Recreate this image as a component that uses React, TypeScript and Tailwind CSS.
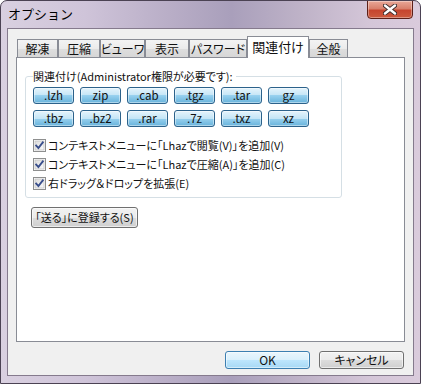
import React from "react";

const FONT = "[font-family:'Noto_Sans_CJK_JP','Noto_Sans',sans-serif]";

const tabs: { label: string; w: string; selected?: boolean }[] = [
  { label: "解凍", w: "w-[41px]" },
  { label: "圧縮", w: "w-[42px]" },
  { label: "ビューワ", w: "w-[45px]" },
  { label: "表示", w: "w-[44px]" },
  { label: "パスワード", w: "w-[58px]" },
  { label: "関連付け", w: "w-[62px]", selected: true },
  { label: "全般", w: "w-[39px]" },
];

const exts = [".lzh", "zip", ".cab", ".tgz", ".tar", "gz", ".tbz", ".bz2", ".rar", ".7z", ".txz", "xz"];

const checks = [
  "コンテキストメニューに「Lhazで閲覧(V)」を追加(V)",
  "コンテキストメニューに「Lhazで圧縮(A)」を追加(C)",
  "右ドラッグ＆ドロップを拡張(E)",
];

function CheckBox() {
  return (
    <svg width="13" height="13" viewBox="0 0 13 13" className="shrink-0">
      <defs>
        <linearGradient id="cbg" x1="0" y1="0" x2="1" y2="1">
          <stop offset="0" stopColor="#dcdcdc" />
          <stop offset="1" stopColor="#fbfbfb" />
        </linearGradient>
      </defs>
      <rect x="0.5" y="0.5" width="12" height="12" fill="#fff" stroke="#8e8f8f" />
      <rect x="2" y="2" width="9" height="9" fill="url(#cbg)" stroke="#c4c4c4" strokeWidth="0.8" />
      <path d="M3.2 6.6 L5.4 9 L9.8 3.4" fill="none" stroke="#3a4f8c" strokeWidth="1.9" strokeLinecap="square" />
    </svg>
  );
}

export default function App() {
  return (
    <div
      className={`w-[421px] h-[384px] overflow-hidden rounded-t-[7px] border border-[#4b4253] bg-[linear-gradient(90deg,#d9d0e0_0%,#cfc4d9_20%,#b9aec7_40%,#a99fbb_55%,#bfb3c8_72%,#d4c6d8_88%,#dacbdc_100%)] flex flex-col text-[11px] text-[#111] ${FONT} [font-feature-settings:'palt'] whitespace-nowrap`}
    >
      {/* Title bar */}
      <div className="h-[27px] flex justify-between shrink-0">
        <div className="pl-[7px] pt-[4px] text-[13px] leading-[18px] text-black [font-feature-settings:normal]">オプション</div>
        <div className="-mt-px mr-[7px] w-[46px] h-[19px] rounded-b-[4px] border border-[#5c1f18] bg-[linear-gradient(#e9a898_0%,#d8806c_45%,#c6452e_55%,#cc5a3e_100%)] flex items-center justify-center shadow-[inset_0_0_0_1px_rgba(255,255,255,0.35)]">
          <svg width="14" height="11" viewBox="0 0 14 11">
            <path d="M2 1.5 L12 9.5 M12 1.5 L2 9.5" stroke="#3a2a2a" strokeWidth="4.2" strokeLinecap="round" />
            <path d="M2 1.5 L12 9.5 M12 1.5 L2 9.5" stroke="#ffffff" strokeWidth="2.4" strokeLinecap="round" />
          </svg>
        </div>
      </div>

      {/* Client area */}
      <div className="mx-[6px] h-[348px] shrink-0 border border-[#857a8d] bg-[#f0f0f0] flex flex-col">
        <div className="ml-[8px] mt-[7px] flex flex-col">
          {/* Tabs */}
          <div className="flex items-end h-[21px] pl-[1px] text-[12px]">
            {tabs.map((t) =>
              t.selected ? (
                <div
                  key={t.label}
                  className={`${t.w} h-[22px] -mb-px relative z-10 border border-b-0 border-[#898c95] bg-white flex items-center justify-center pb-[2px] text-[13px]`}
                >
                  {t.label}
                </div>
              ) : (
                <div
                  key={t.label}
                  className={`${t.w} h-[18px] border border-b-0 border-[#898c95] bg-[linear-gradient(#f3f3f3_0%,#ebebeb_50%,#dedede_50%,#d7d7d7_100%)] flex items-center justify-center`}
                >
                  {t.label}
                </div>
              )
            )}
          </div>

          {/* Panel */}
          <div className="w-[389px] h-[285px] border border-[#898c95] bg-white flex flex-col">
            <fieldset className="ml-[8px] mt-[11px] w-[317px] border border-[#d5dfe5] rounded-[3px] px-[7px] pb-[4px]">
              <legend className="px-0 leading-[14px] pr-[3px]">関連付け(Administrator権限が必要です):</legend>
              <div className="mt-[4px] grid grid-cols-[repeat(6,41px)] gap-x-[6px] gap-y-[6px]">
                {exts.map((e) => (
                  <div
                    key={e}
                    className="h-[17px] rounded-[3px] border border-[#2c628b] bg-[linear-gradient(#e5f4fc_0%,#c4e5f6_50%,#98d1ef_50%,#68b3db_100%)] flex items-center justify-center text-[11.5px] leading-none shadow-[inset_0_0_0_1px_rgba(255,255,255,0.45)]"
                  >
                    {e}
                  </div>
                ))}
              </div>
              <div className="mt-[9px] flex flex-col">
                {checks.map((c) => (
                  <div key={c} className="h-[19px] flex items-center gap-[2px]">
                    <CheckBox />
                    <span className="leading-none">{c}</span>
                  </div>
                ))}
              </div>
            </fieldset>

            <div className="ml-[14px] mt-[9px] w-[107px] h-[21px] rounded-[3px] border border-[#707070] bg-[linear-gradient(#f2f2f2_0%,#ebebeb_50%,#dddddd_50%,#cfcfcf_100%)] flex items-center justify-center shadow-[inset_0_0_0_1px_rgba(255,255,255,0.6)]">
              「送る」に登録する(S)
            </div>
          </div>
        </div>

        {/* Bottom buttons */}
        <div className="mt-[9px] pr-[9px] flex justify-end gap-[9px] text-[12px]">
          <div className="w-[85px] h-[18px] rounded-[3px] border border-[#3c7fb1] bg-[linear-gradient(#eaf6fd_0%,#d9f0fc_50%,#bee6fd_50%,#a7d9f5_100%)] flex items-center justify-center shadow-[inset_0_0_0_1px_rgba(255,255,255,0.5)]">
            OK
          </div>
          <div className="w-[85px] h-[18px] rounded-[3px] border border-[#707070] bg-[linear-gradient(#f2f2f2_0%,#ebebeb_50%,#dddddd_50%,#cfcfcf_100%)] flex items-center justify-center shadow-[inset_0_0_0_1px_rgba(255,255,255,0.6)]">
            キャンセル
          </div>
        </div>
      </div>
    </div>
  );
}
